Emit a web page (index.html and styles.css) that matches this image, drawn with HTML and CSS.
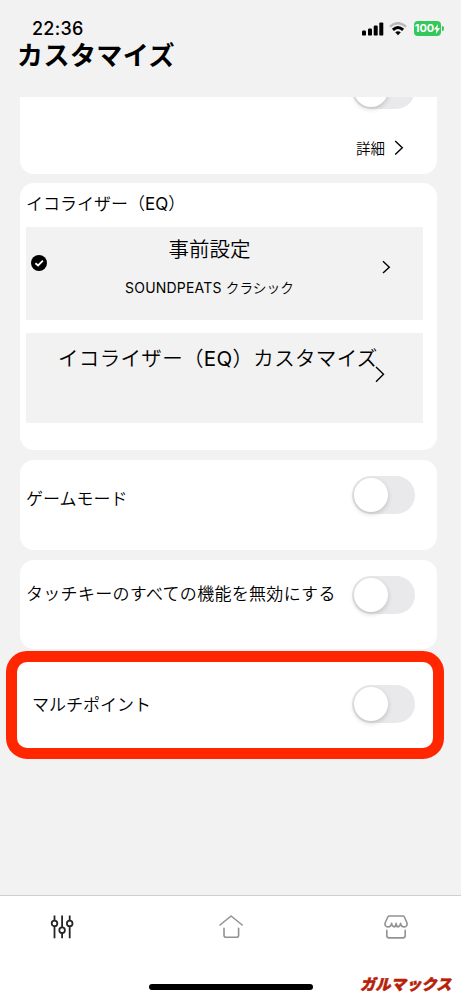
FILE: index.html
```html
<!DOCTYPE html>
<html lang="ja">
<head>
<meta charset="utf-8">
<meta name="viewport" content="width=device-width">
<title>カスタマイズ</title>
<link rel="stylesheet" href="styles.css">
</head>
<body>
<div class="screen">
  <header class="header">
    <div class="status">
      <span class="time">22:36</span>
      <div class="indicators">
        <svg class="signal" width="22" height="14" viewBox="0 0 22 14"><rect x="0" y="8.6" width="4" height="5" rx="1.2"/><rect x="6" y="6.5" width="4" height="7.1" rx="1.2"/><rect x="11.7" y="3.6" width="4" height="10" rx="1.2"/><rect x="17.3" y="0.4" width="4" height="13.2" rx="1.2"/></svg>
        <svg class="wifi" width="18" height="14" viewBox="0 0 18 14" fill="none"><path d="M1 4.6Q9-2.2 17 4.6" stroke="#b9b9b9" stroke-width="2.5"/><path d="M3.9 7.8Q9 3.3 14.1 7.8" stroke="#000" stroke-width="3"/><path d="M6.2 10.3Q9 8 11.8 10.3L9 13.3Z" fill="#000"/></svg>
        <div class="battery"><span>100</span><svg width="6" height="10" viewBox="0 0 6 10"><path d="M4 0L0 5.5h2.4L1.8 10 6 4.3H3.4z" fill="#fff"/></svg></div>
        <span class="battery-tip"></span>
      </div>
    </div>
    <h1 class="title">カスタマイズ</h1>
  </header>
  <main class="content">
    <section class="card card-top">
      <div class="toggle"><i></i></div>
      <div class="details"><span>詳細</span><svg width="10" height="16" viewBox="0 0 10 16"><path class="chevron" d="M1.2 1L8.3 7.8 1.2 14.6"/></svg></div>
    </section>
    <section class="card card-eq">
      <h2 class="label eq-label">イコライザー（<span class="latin">EQ</span>）</h2>
      <div class="panel preset">
        <svg class="check" width="16" height="16" viewBox="0 0 16 16"><circle cx="8" cy="8" r="8"/><path d="M4.4 8.2L7.1 10.5 11.9 5.6" fill="none" stroke="#fff" stroke-width="1.8"/></svg>
        <div class="preset-text"><div class="panel-title">事前設定</div><div class="preset-name"><span class="brand">SOUNDPEATS</span><span>クラシック</span></div></div>
        <svg class="preset-arrow" width="9" height="14" viewBox="0 0 9 14"><path class="chevron" d="M1 1.3L7.3 7.2 1 13"/></svg>
      </div>
      <div class="panel custom">
        <div class="panel-title custom-title">イコライザー（<span class="latin">EQ</span>）カスタマイズ</div>
        <svg class="custom-arrow" width="10" height="17" viewBox="0 0 10 17"><path class="chevron" d="M1 1L8.5 8.3 1 15.8"/></svg>
      </div>
    </section>
    <section class="card row game"><span class="label">ゲームモード</span><div class="toggle"><i></i></div></section>
    <section class="card row touch"><span class="label">タッチキーのすべての機能を無効にする</span><div class="toggle"><i></i></div></section>
    <section class="row multipoint"><span class="label">マルチポイント</span><div class="toggle"><i></i></div></section>
  </main>
  <footer class="footer">
    <nav class="tabs">
      <svg width="24" height="24" viewBox="0 0 24 24" fill="none" stroke="#252525" stroke-width="1.8"><path d="M4.5.4v5.3M4.5 11v12.3M12.1.4v12.1M12.1 18v5.3M19.7.4v5.3M19.7 11v12.3"/><circle cx="4.5" cy="8.4" r="2.8"/><circle cx="12.1" cy="15.2" r="2.8"/><circle cx="19.7" cy="8.4" r="2.8"/></svg>
      <svg class="home" width="24" height="24" viewBox="0 0 24 24" fill="none" stroke="#929292" stroke-width="1.6" stroke-linecap="round" stroke-linejoin="round"><path d="M1 10L12.1 1 23.2 10M5 13.4v6.8q0 2 2 2h10.6q2 0 2-2v-6.8"/></svg>
      <svg width="24" height="24" viewBox="0 0 24 24" fill="none" stroke="#929292" stroke-width="1.6" stroke-linecap="round" stroke-linejoin="round"><path d="M5.5 1h13.2q1.2 0 1.7 1l2.4 5.5c1 2.4-.4 4.400-2.600 4.400-2 0-3.300-1.300-3.600-3.500-.5 2.200-1.200 3.500-2.500 3.500s-1.800-1.300-2-3.500c-.2 2.200-.8 3.500-2 3.500s-2-1.300-2.500-3.500c-.3 2.200-1.700 3.500-3.700 3.500-2.200 0-3.600-2-2.600-4.400L3.800 2q.5-1 1.700-1ZM2.800 15.400v5q0 2.500 2.500 2.500h13.400q2.500 0 2.500-2.500v-5"/></svg>
    </nav>
    <div class="bottom"><span class="home-bar"></span><span class="watermark">ガルマックス</span></div>
  </footer>
</div>
</body>
</html>
```
FILE: styles.css
```css
* { box-sizing: border-box; }
body { margin: 0; background: #f2f2f2; color: #000; font-family: Inter, "Noto Sans CJK JP", sans-serif; }
svg { display: block; flex: none; }
.screen { width: 461px; height: 1000px; display: flex; flex-direction: column; overflow: hidden; }
.header { height: 97px; flex: none; padding-top: 18px; }
.status { height: 21px; display: flex; justify-content: space-between; padding: 0 17px 0 32px; }
.time { font-size: 18px; line-height: 21px; font-weight: 500; letter-spacing: .25px; }
.indicators { display: flex; align-items: center; }
.wifi { margin: 0 7px 0 5px; }
.battery { width: 27px; height: 15px; border-radius: 4px; background: #34c759; color: #fff; display: flex; align-items: center; justify-content: center; font-size: 11px; line-height: 15px; font-weight: 700; }
.battery-tip { width: 2px; height: 5px; margin-left: 1px; border-radius: 0 2px 2px 0; background: #34c759; }
.title { margin: 0; padding-left: 17px; font-size: 26px; line-height: 34px; font-weight: 700; letter-spacing: .45px; }
.content { flex: 1; min-height: 0; padding: 0 24px 0 20px; display: flex; flex-direction: column; }
.card { background: #fff; border-radius: 14px; flex: none; }
.card-top { height: 77px; border-radius: 0 0 14px 14px; overflow: hidden; display: flex; flex-direction: column; align-items: flex-end; padding-right: 22px; }
.card-top .toggle { margin-top: -26px; }
.details { display: flex; align-items: center; gap: 9px; margin: 29px 11px 0 0; font-size: 14.5px; line-height: 22px; font-weight: 350; }
.details svg { margin-top: -2px; }
.chevron { fill: none; stroke: #000; stroke-width: 1.4; }
.toggle { width: 63px; height: 38px; flex: none; border-radius: 19px; background: #e9e9eb; padding: 2px; }
.toggle i { display: block; width: 34px; height: 34px; border-radius: 50%; background: #fff; box-shadow: 0 2px 5px #0000002e; }
.card-eq { height: 267px; margin-top: 9px; padding: 8px 14px 0 6px; }
.label { font-size: 17px; line-height: 26px; font-weight: 350; white-space: nowrap; margin: 0; }
.latin { font-weight: 400; }
.eq-label { margin-bottom: 10px; }
.panel { background: #f2f2f2; display: flex; }
.preset { height: 93px; padding: 0 32px 0 5px; }
.check { margin-top: 28px; }
.preset-text { flex: 1; display: flex; flex-direction: column; align-items: center; padding-right: 10px; }
.panel-title { font-size: 20.5px; line-height: 30px; margin-top: 8px; font-weight: 350; white-space: nowrap; }
.preset-name { margin-top: 13px; display: flex; gap: 4px; font-size: 13.7px; line-height: 20px; font-weight: 350; }
.brand { font-size: 14px; letter-spacing: .2px; font-weight: 400; }
.preset-arrow { margin-top: 33px; }
.custom { height: 90px; margin-top: 13px; padding-left: 32px; }
.custom-title { margin-top: 11px; letter-spacing: .33px; }
.custom-arrow { margin: 33px 0 0 -3px; }
.row { display: flex; justify-content: space-between; align-items: flex-start; }
.game { height: 90px; margin-top: 10px; padding: 16px 22px 0 6px; }
.game .label { margin-top: 10px; }
.touch { height: 89px; margin-top: 10px; padding: 16px 22px 0 6px; }
.touch .label { margin-top: 5px; letter-spacing: .3px; }
.multipoint { flex: none; height: 108px; margin: 2px -7px 0 -14px; background: #fff; border: 11px solid #ff2600; border-radius: 21px; padding: 23px 18px 0 15px; }
.multipoint .label { margin-top: 7px; }
.footer { height: 105px; flex: none; background: #fff; border-top: 1px solid #cfcfcf; display: flex; flex-direction: column; justify-content: space-between; }
.tabs { display: flex; justify-content: space-between; padding: 19px 53px 0 50px; }
.home { margin-left: 3px; }
.bottom { height: 24px; display: grid; grid-template-columns: 149px 164px 148px; }
.home-bar { grid-column: 2; height: 6px; margin-top: 8px; border-radius: 3px; background: #000; }
.watermark { grid-column: 3; padding-left: 47px; color: #b81f0b; font-size: 15.3px; line-height: 18px; font-weight: 900; font-style: italic; white-space: nowrap; -webkit-text-stroke: .5px #b81f0b; }
```
